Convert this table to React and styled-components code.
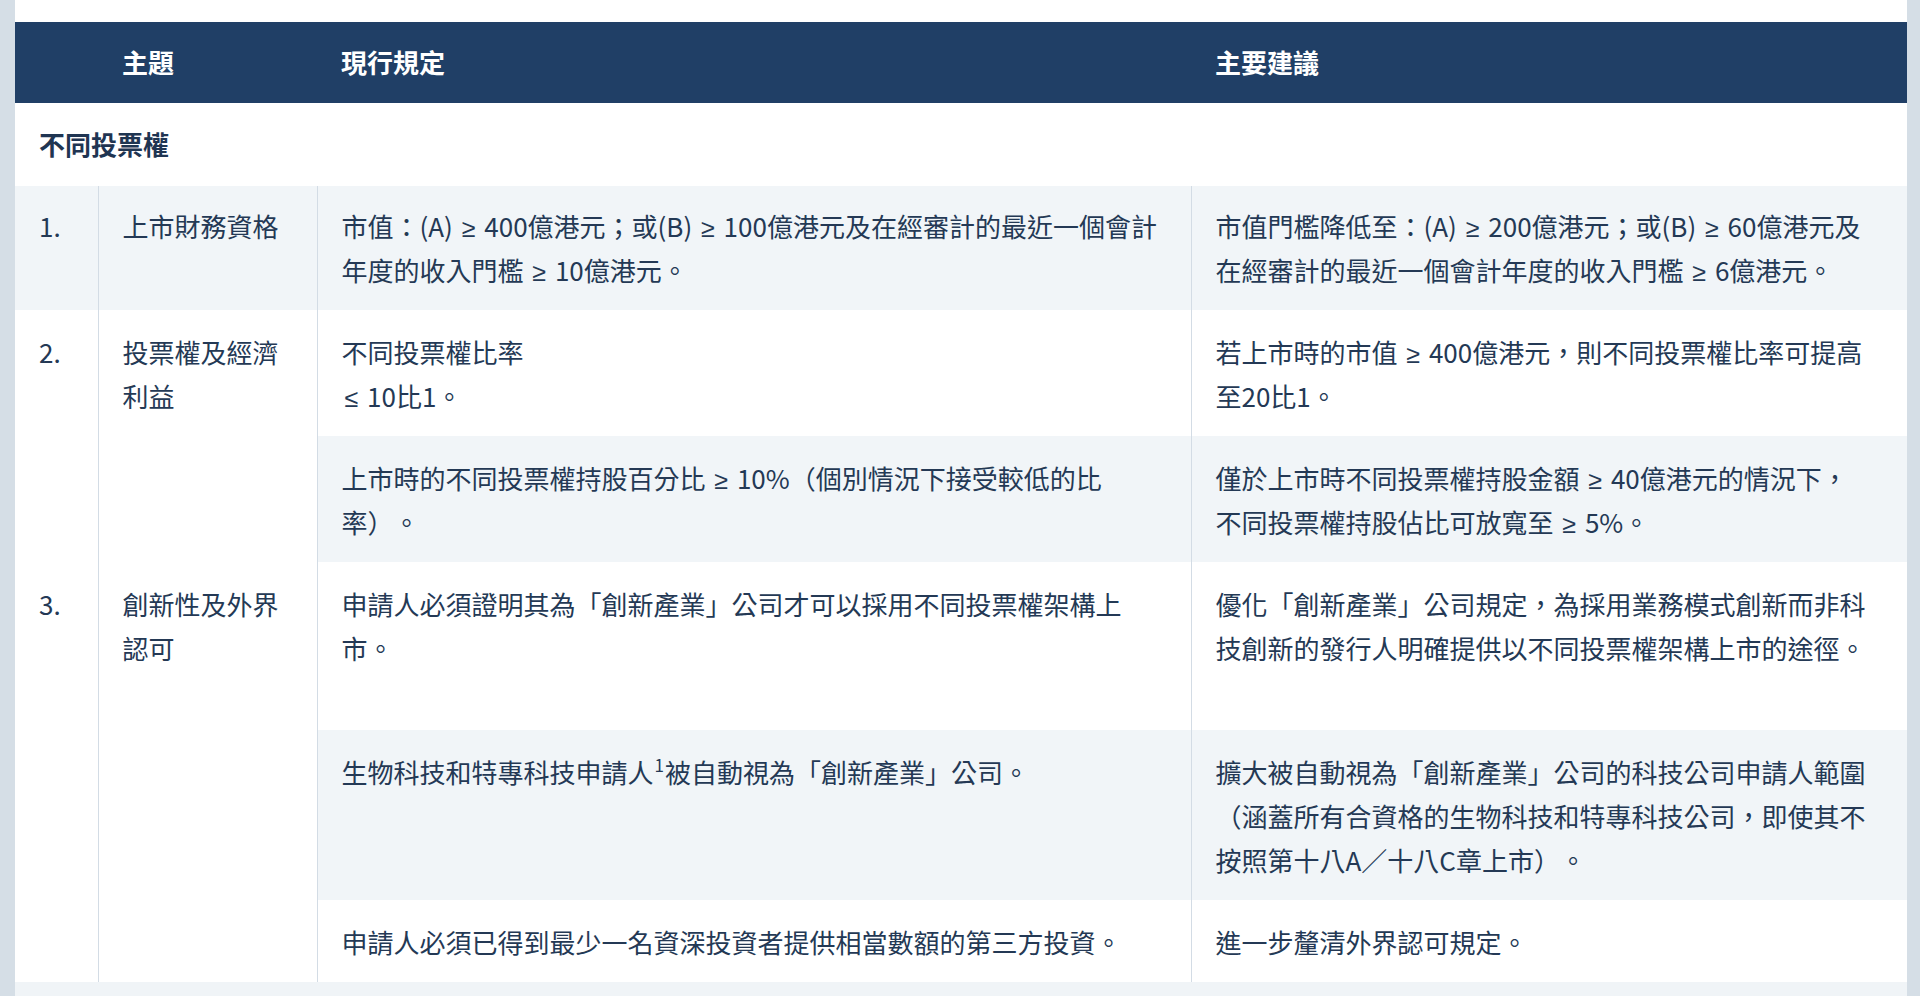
import React from "react";
import styled, { createGlobalStyle } from "styled-components";

const Global = createGlobalStyle`
  html, body {
    margin: 0;
    padding: 0;
    background: #d5dee6;
    height: 996px;
    overflow: hidden;
  }
  body {
    font-family: "Noto Sans CJK TC", "Noto Sans CJK SC", "Noto Sans", sans-serif;
    color: #243955;
  }
`;

const Page = styled.div`
  margin: 0 13px 0 15px;
  height: 996px;
  overflow: hidden;
  background: #ffffff;
  padding-top: 22px;
  box-sizing: border-box;
`;

const Table = styled.table`
  width: 100%;
  border-collapse: collapse;
  table-layout: fixed;
  font-size: 26px;
  line-height: 44px;
  text-spacing-trim: space-all;
`;

const HeadRow = styled.tr`
  background: #203f66;
`;

const HeadCell = styled.th`
  color: #ffffff;
  font-weight: 700;
  text-align: left;
  padding: 18px 24px 19px;
  height: 44px;
`;

const SectionCell = styled.td`
  font-weight: 700;
  color: #1f3552;
  padding: 19px 24px 20px;
  background: #ffffff;
`;

const Row = styled.tr`
  background: ${(p) => (p.$shade ? "#f1f5f8" : "#ffffff")};
  height: ${(p) => (p.$h ? `${p.$h}px` : "auto")};
`;

const Cell = styled.td`
  vertical-align: top;
  padding: ${(p) => (p.$compact ? "18px 24px 18px" : "20px 24px 18px")};
  border-left: ${(p) => (p.$first ? "none" : "1px solid #d3dce5")};
  background: ${(p) => (p.$bg ? p.$bg : "transparent")};
`;

const NumCell = styled(Cell)`
  padding-left: 24px;
  padding-right: 8px;
`;

const Sym = styled.span`
  font-family: "Liberation Sans", "Noto Sans", sans-serif;
  font-size: 25px;
  line-height: 1;
  margin: 0 3px;
`;

const Sup = styled.sup`
  font-size: 17px;
  line-height: 0;
  vertical-align: 11px;
  margin: 0 1px;
`;

const TailRow = styled.tr`
  background: #f0f4f7;
  height: 60px;
`;

const GE = () => <Sym>≥</Sym>;
const LE = () => <Sym>≤</Sym>;

export default function App() {
  return (
    <>
      <Global />
      <Page>
        <Table>
          <colgroup>
            <col style={{ width: 83 }} />
            <col style={{ width: 219 }} />
            <col style={{ width: 874 }} />
            <col style={{ width: 716 }} />
          </colgroup>
          <thead>
            <HeadRow>
              <HeadCell></HeadCell>
              <HeadCell>主題</HeadCell>
              <HeadCell>現行規定</HeadCell>
              <HeadCell>主要建議</HeadCell>
            </HeadRow>
          </thead>
          <tbody>
            <tr>
              <SectionCell colSpan={4}>不同投票權</SectionCell>
            </tr>
            <Row $shade>
              <NumCell $first $compact>1.</NumCell>
              <Cell $compact>上市財務資格</Cell>
              <Cell $compact>
                市值：(A) <GE /> 400億港元；或(B) <GE /> 100億港元及在經審計的最近一個會計
                <br />
                年度的收入門檻 <GE /> 10億港元。
              </Cell>
              <Cell $compact>
                市值門檻降低至：(A) <GE /> 200億港元；或(B) <GE /> 60億港元及
                <br />
                在經審計的最近一個會計年度的收入門檻 <GE /> 6億港元。
              </Cell>
            </Row>
            <Row>
              <NumCell $first rowSpan={2} $bg="#ffffff">
                2.
              </NumCell>
              <Cell rowSpan={2} $bg="#ffffff">
                投票權及經濟
                <br />
                利益
              </Cell>
              <Cell>
                不同投票權比率
                <br />
                <LE /> 10比1。
              </Cell>
              <Cell>
                若上市時的市值 <GE /> 400億港元，則不同投票權比率可提高
                <br />
                至20比1。
              </Cell>
            </Row>
            <Row $shade>
              <Cell>
                上市時的不同投票權持股百分比 <GE /> 10%（個別情況下接受較低的比
                <br />
                率）。
              </Cell>
              <Cell>
                僅於上市時不同投票權持股金額 <GE /> 40億港元的情況下，
                <br />
                不同投票權持股佔比可放寬至 <GE /> 5%。
              </Cell>
            </Row>
            <Row $h={168}>
              <NumCell $first rowSpan={3} $bg="#ffffff">
                3.
              </NumCell>
              <Cell rowSpan={3} $bg="#ffffff">
                創新性及外界
                <br />
                認可
              </Cell>
              <Cell>
                申請人必須證明其為「創新產業」公司才可以採用不同投票權架構上
                <br />
                市。
              </Cell>
              <Cell>
                優化「創新產業」公司規定，為採用業務模式創新而非科
                <br />
                技創新的發行人明確提供以不同投票權架構上市的途徑。
              </Cell>
            </Row>
            <Row $shade>
              <Cell>
                生物科技和特專科技申請人<Sup>1</Sup>被自動視為「創新產業」公司。
              </Cell>
              <Cell>
                擴大被自動視為「創新產業」公司的科技公司申請人範圍
                <br />
                （涵蓋所有合資格的生物科技和特專科技公司，即使其不
                <br />
                按照第十八A／十八C章上市）。
              </Cell>
            </Row>
            <Row>
              <Cell>申請人必須已得到最少一名資深投資者提供相當數額的第三方投資。</Cell>
              <Cell>進一步釐清外界認可規定。</Cell>
            </Row>
            <TailRow>
              <td colSpan={4}></td>
            </TailRow>
          </tbody>
        </Table>
      </Page>
    </>
  );
}
